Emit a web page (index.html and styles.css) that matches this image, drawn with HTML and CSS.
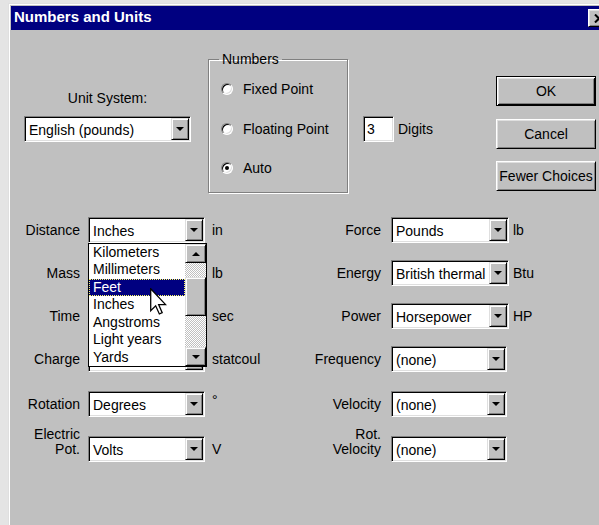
FILE: index.html
```html
<!DOCTYPE html>
<html lang="en">
<head>
<meta charset="utf-8">
<title>Numbers and Units</title>
<link rel="stylesheet" href="styles.css">
</head>
<body>
<div class="window">
  <div class="titlebar">
    <span class="title">Numbers and Units</span>
    <span class="close raised-btn">
      <svg width="10" height="9" viewBox="0 0 10 9"><path d="M1 0.5 L9 8.5 M9 0.5 L1 8.5" stroke="#000" stroke-width="2" fill="none"/></svg>
    </span>
  </div>

  <div class="dialog">
    <div class="top">
      <div class="unit-system">
        <div class="caption">Unit System:</div>
        <div class="combo"><span class="value">English (pounds)</span><span class="drop"><i class="tri-down"></i></span></div>
      </div>

      <fieldset class="numbers">
        <legend>Numbers</legend>
        <div class="radio"><span class="circle"></span>Fixed Point</div>
        <div class="radio"><span class="circle"></span>Floating Point</div>
        <div class="radio"><span class="circle checked"></span>Auto</div>
      </fieldset>

      <div class="digits">
        <span class="textbox">3</span>
        <span>Digits</span>
      </div>

      <div class="buttons">
        <div class="button default">OK</div>
        <div class="button">Cancel</div>
        <div class="button">Fewer Choices</div>
      </div>
    </div>

    <div class="fields">
      <!-- Distance / Force -->
      <div class="lbl">Distance</div>
      <div class="combo open"><span class="value">Inches</span><span class="drop"><i class="tri-down"></i></span>
        <div class="dropdown">
          <ul class="items">
            <li>Kilometers</li>
            <li>Millimeters</li>
            <li class="selected">Feet</li>
            <li>Inches</li>
            <li>Angstroms</li>
            <li>Light years</li>
            <li>Yards</li>
          </ul>
          <div class="scrollbar">
            <span class="sb-btn"><i class="tri-up"></i></span>
            <span class="track top-track"></span>
            <span class="thumb"></span>
            <span class="track"></span>
            <span class="sb-btn"><i class="tri-down"></i></span>
          </div>
          <svg class="cursor" width="17" height="27" viewBox="0 0 12 19"><path d="M0.5 0.5 V16 L4 12.5 L6.6 18.3 L8.6 17.4 L6.1 11.7 H11 Z" fill="#fff" stroke="#000" stroke-width="0.9" stroke-linejoin="miter"/></svg>
        </div>
      </div>
      <div class="unit">in</div>
      <div class="lbl">Force</div>
      <div class="combo"><span class="value">Pounds</span><span class="drop"><i class="tri-down"></i></span></div>
      <div class="unit r">lb</div>

      <!-- Mass / Energy (mass box sits under the open list) -->
      <div class="lbl">Mass</div>
      <div class="combo"><span class="value"></span><span class="drop"><i class="tri-down"></i></span></div>
      <div class="unit">lb</div>
      <div class="lbl">Energy</div>
      <div class="combo"><span class="value">British thermal</span><span class="drop"><i class="tri-down"></i></span></div>
      <div class="unit r">Btu</div>

      <!-- Time / Power -->
      <div class="lbl">Time</div>
      <div class="combo"><span class="value"></span><span class="drop"><i class="tri-down"></i></span></div>
      <div class="unit">sec</div>
      <div class="lbl">Power</div>
      <div class="combo"><span class="value">Horsepower</span><span class="drop"><i class="tri-down"></i></span></div>
      <div class="unit r">HP</div>

      <!-- Charge / Frequency -->
      <div class="lbl">Charge</div>
      <div class="combo"><span class="value"></span><span class="drop"><i class="tri-down"></i></span></div>
      <div class="unit">statcoul</div>
      <div class="lbl">Frequency</div>
      <div class="combo short"><span class="value">(none)</span><span class="drop"><i class="tri-down"></i></span></div>
      <div class="unit r"></div>

      <!-- Rotation / Velocity -->
      <div class="lbl">Rotation</div>
      <div class="combo"><span class="value">Degrees</span><span class="drop"><i class="tri-down"></i></span></div>
      <div class="unit deg">°</div>
      <div class="lbl">Velocity</div>
      <div class="combo short"><span class="value">(none)</span><span class="drop"><i class="tri-down"></i></span></div>
      <div class="unit r"></div>

      <!-- Electric Pot. / Rot. Velocity -->
      <div class="lbl two">Electric<br>Pot.</div>
      <div class="combo"><span class="value">Volts</span><span class="drop"><i class="tri-down"></i></span></div>
      <div class="unit">V</div>
      <div class="lbl two">Rot.<br>Velocity</div>
      <div class="combo short"><span class="value">(none)</span><span class="drop"><i class="tri-down"></i></span></div>
      <div class="unit r"></div>
    </div>
  </div>
</div>
</body>
</html>
```

FILE: styles.css
```css
* { box-sizing: border-box; }

html, body {
  margin: 0;
  height: 100%;
}

body {
  background: #e4e4e4;
  overflow: hidden;
  font: 14px/16px "Liberation Sans", Arial, sans-serif;
  color: #000;
}

/* window frame */
.window {
  margin: 3px 0 0 8px;
  width: 602px;
  height: 540px;
  background: #c0c0c0;
  border-top: 1px solid #dfdfdf;
  border-left: 1px solid #dfdfdf;
  box-shadow: inset 1px 1px #fff;
  padding: 2px 0 0 2px;
}

.titlebar {
  height: 24px;
  background: #000080;
  display: flex;
  align-items: flex-start;
  padding-left: 3px;
}

.title {
  color: #fff;
  font-weight: bold;
  font-size: 15px;
  line-height: 22px;
}

.close {
  margin: 3px 1px 0 auto;
  width: 21px;
  height: 18px;
  display: flex;
  align-items: center;
  justify-content: center;
}

/* bevels */
.raised-btn {
  background: #c0c0c0;
  border: 1px solid;
  border-color: #fff #000 #000 #fff;
  box-shadow: inset 1px 1px #dfdfdf, inset -1px -1px #808080;
}

.dialog {
  padding: 21px 14px 0 13px;
}

/* top area */
.top {
  display: flex;
  align-items: flex-start;
  height: 142px;
}

.unit-system {
  width: 167px;
  margin-top: 39px;
  display: flex;
  flex-direction: column;
}

.caption {
  text-align: center;
  margin-bottom: 10px;
}

.numbers {
  margin: 0 0 0 17px;
  width: 140px;
  height: 142px;
  padding: 14px 0 0 12px;
  border: 1px solid #808080;
  box-shadow: inset 1px 1px #fff, 1px 1px #fff;
  display: flex;
  flex-direction: column;
  gap: 23.5px;
}

.numbers legend {
  padding: 0 3px;
  margin-left: -2px;
  line-height: 16px;
}

.radio {
  display: flex;
  align-items: center;
  height: 16px;
}

.circle {
  position: relative;
  width: 12px;
  height: 12px;
  margin-right: 10px;
  border-radius: 50%;
  background: #fff;
  border: 1px solid;
  border-color: #808080 #fff #fff #808080;
  box-shadow: inset 1px 1px #000, inset -1px -1px #dfdfdf;
}

.circle.checked::after {
  content: "";
  position: absolute;
  left: 3px;
  top: 3px;
  width: 4px;
  height: 4px;
  border-radius: 50%;
  background: #000;
}

.digits {
  margin: 65px 0 0 15px;
  display: flex;
  align-items: center;
  gap: 4px;
}

.textbox {
  width: 31px;
  height: 26px;
  background: #fff;
  border: 1px solid;
  border-color: #808080 #fff #fff #808080;
  box-shadow: inset 1px 1px #000, inset -1px -1px #dfdfdf;
  padding-left: 3px;
  line-height: 24px;
}

.buttons {
  margin: 25px 0 0 auto;
  width: 100px;
  display: flex;
  flex-direction: column;
  gap: 12.5px;
}

.button {
  height: 30px;
  text-align: center;
  line-height: 28px;
  background: #c0c0c0;
  border: 1px solid;
  border-color: #fff #000 #000 #fff;
  box-shadow: inset 1px 1px #dfdfdf, inset -1px -1px #808080;
}

.button.default {
  border-color: #000;
  line-height: 28px;
  box-shadow: inset 1px 1px #fff, inset -1px -1px #000, inset 2px 2px #dfdfdf, inset -2px -2px #808080;
}

/* unit rows */
.fields {
  margin-top: 24px;
  display: grid;
  grid-template-columns: 64px 117px 87px 99px 118px 1fr;
  grid-template-rows: 43px 43px 43px 45px 45px 26px;
  align-items: start;
}

.lbl {
  text-align: right;
  padding-right: 8px;
  line-height: 26px;
  white-space: nowrap;
}

.fields .lbl:nth-child(6n+4) {
  padding-right: 10px;
}

.lbl.two {
  line-height: 15px;
  margin-top: -9px;
}

.unit {
  padding-left: 7px;
  line-height: 26px;
}

.unit.r {
  padding-left: 4px;
}

.unit.deg {
  line-height: 18px;
}

.combo {
  position: relative;
  display: flex;
  height: 26px;
  background: #fff;
  border: 1px solid;
  border-color: #808080 #fff #fff #808080;
  box-shadow: inset 1px 1px #000, inset -1px -1px #dfdfdf;
  padding: 1px;
}

.combo.short {
  width: 116px;
}

.combo .value {
  flex: 1;
  min-width: 0;
  padding-left: 3px;
  line-height: 25px;
  overflow: hidden;
  white-space: nowrap;
}

.drop {
  flex: 0 0 18px;
  display: flex;
  align-items: center;
  justify-content: center;
  background: #c0c0c0;
  border: 1px solid;
  border-color: #dfdfdf #000 #000 #dfdfdf;
  box-shadow: inset 1px 1px #fff, inset -1px -1px #808080;
}

.tri-down, .tri-up {
  width: 0;
  height: 0;
  border-left: 4px solid transparent;
  border-right: 4px solid transparent;
}

.tri-down { border-top: 4px solid #000; }
.tri-up { border-bottom: 4px solid #000; }

/* open list of the Distance combo */
.dropdown {
  position: absolute;
  z-index: 5;
  left: -1px;
  top: 25px;
  width: 119px;
  height: 124px;
  background: #fff;
  border: 1px solid #000;
  display: flex;
}

.items {
  list-style: none;
  margin: 0;
  padding: 0;
  flex: 1;
}

.items li {
  height: 17.43px;
  line-height: 17.43px;
  padding-left: 4px;
  white-space: nowrap;
}

.items li.selected {
  background: #000080;
  color: #fff;
  outline: 1px dotted #ffff60;
  outline-offset: -1px;
}

.scrollbar {
  width: 21px;
  display: flex;
  flex-direction: column;
}

.sb-btn {
  height: 19px;
  flex: none;
  display: flex;
  align-items: center;
  justify-content: center;
  background: #c0c0c0;
  border: 1px solid;
  border-color: #dfdfdf #000 #000 #dfdfdf;
  box-shadow: inset 1px 1px #fff, inset -1px -1px #808080;
}

.track {
  flex: 1;
  background: repeating-conic-gradient(#fff 0 25%, #c0c0c0 0 50%) 0 0 / 2px 2px;
}

.track.top-track {
  flex: 0 0 14px;
}

.thumb {
  height: 39px;
  flex: none;
  background: #c0c0c0;
  border: 1px solid;
  border-color: #dfdfdf #000 #000 #dfdfdf;
  box-shadow: inset 1px 1px #fff, inset -1px -1px #808080;
}

.cursor {
  position: absolute;
  left: 61px;
  top: 44px;
}
```
